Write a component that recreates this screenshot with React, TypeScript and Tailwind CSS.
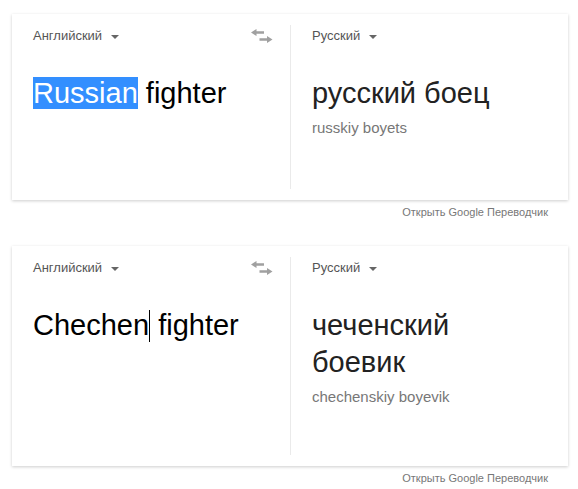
import type { ReactNode } from "react";

const font = { fontFamily: '"Liberation Sans", Arial, sans-serif' };

function Caret() {
  return (
    <span className="ml-[9px] inline-block h-0 w-0 border-x-[4px] border-t-[4px] border-x-transparent border-t-[#666] align-middle" />
  );
}

function SwapIcon() {
  return (
    <svg width="22" height="14" viewBox="0 0 22 14" className="block">
      <path d="M0 3.5 L5.5 0 L5.5 2.2 L13 2.2 L13 4.8 L5.5 4.8 L5.5 7 Z" fill="#a0a0a0" />
      <path d="M21.5 10.5 L16 7 L16 9.2 L8.5 9.2 L8.5 11.8 L16 11.8 L16 14 Z" fill="#a0a0a0" />
    </svg>
  );
}

type CardProps = {
  height: string;
  source: ReactNode;
  target: string[];
  translit: string;
};

function TranslateCard({ height, source, target, translit }: CardProps) {
  return (
    <div>
      <div className={`flex w-[556px] bg-white py-[11px] shadow-[0_1px_3px_rgba(0,0,0,0.2)] ${height}`}>
        <div className="w-[278px] pl-[21px] pr-[17px]">
          <div className="mt-[1px] flex h-[20px] items-center justify-between">
            <span className="text-[13px] text-[#555]">
              Английский
              <Caret />
            </span>
            <SwapIcon />
          </div>
          <div className="mt-[29px] text-[29px] leading-[36px] text-black">{source}</div>
        </div>
        <div className="w-[278px] border-l border-[#eaeaea] pl-[21px] pr-[16px]">
          <div className="mt-[1px] flex h-[20px] items-center">
            <span className="text-[13px] text-[#555]">
              Русский
              <Caret />
            </span>
          </div>
          <div className="mt-[29px] text-[29px] leading-[37px] text-[#222]">
            {target.map((line) => (
              <div key={line}>{line}</div>
            ))}
          </div>
          <div className="mt-[6px] text-[15px] leading-[20px] text-[#777]">{translit}</div>
        </div>
      </div>
      <div className="mt-[4px] w-[556px] pr-[20px] text-right text-[11px] leading-[16px] text-[#777]">
        Открыть Google Переводчик
      </div>
    </div>
  );
}

export default function App() {
  return (
    <div className="min-h-[489px] bg-white pl-[12px] pt-[14px]" style={font}>
      <div className="flex flex-col gap-[26px]">
        <TranslateCard
          height="h-[186px]"
          source={
            <>
              <span className="bg-[#338fff] text-white">Russian</span> fighter
            </>
          }
          target={["русский боец"]}
          translit="russkiy boyets"
        />
        <TranslateCard
          height="h-[220px]"
          source={
            <>
              Chechen
              <span className="inline-block h-[32px] w-0 border-l border-black align-[-7px]" /> fighter
            </>
          }
          target={["чеченский", "боевик"]}
          translit="chechenskiy boyevik"
        />
      </div>
    </div>
  );
}
